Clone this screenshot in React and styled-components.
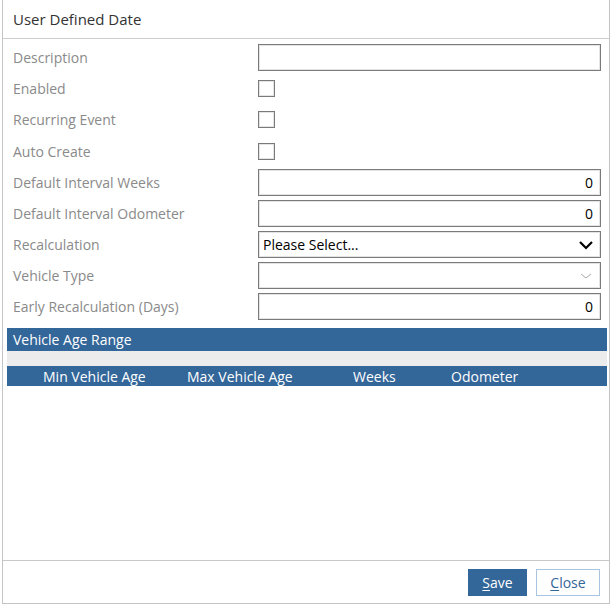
import React from 'react';
import styled, { createGlobalStyle } from 'styled-components';

const GlobalStyle = createGlobalStyle`
    body {
        margin: 0;
        background: #fff;
        font-family: "Open Sans", "Liberation Sans", sans-serif;
        font-size: 14px;
    }
`;

const Panel = styled.div`
    margin-left: 2px;
    width: 608px;
    height: 604px;
    box-sizing: border-box;
    border-left: 1px solid #c4c4c4;
    border-right: 1px solid #c4c4c4;
    border-bottom: 1px solid #c4c4c4;
    display: flex;
    flex-direction: column;
    background: #fff;
`;

const Header = styled.div`
    height: 38px;
    border-bottom: 1px solid #cccccc;
    display: flex;
    align-items: center;
    padding-left: 10px;
    font-size: 15px;
    color: #333;
`;

const Body = styled.div`
    flex: 1;
    display: flex;
    flex-direction: column;
`;

const Form = styled.div`
    display: grid;
    grid-template-columns: 245px 1fr;
    grid-template-rows: 27px 27px 27px 28px 27px 27px 27px 27px 27px;
    row-gap: 4px;
    padding: 5px 8px 0 10px;
`;

const Label = styled.div`
    color: #8a8a8a;
    display: flex;
    align-items: center;
`;

const Field = styled.div`
    display: flex;
    align-items: center;
`;

const TextBox = styled.div`
    width: 100%;
    height: 27px;
    box-sizing: border-box;
    border: 1px solid #7a7a7a;
    box-shadow: inset 0 0 0 1px #e4e4e4;
    display: flex;
    align-items: center;
    justify-content: ${p => (p.$right ? 'flex-end' : 'space-between')};
    padding: 0 7px 0 4px;
    color: #000;
`;

const Check = styled.div`
    width: 17px;
    height: 17px;
    box-sizing: border-box;
    border: 1px solid #7a7a7a;
    box-shadow: inset 0 0 0 1px #e4e4e4;
`;

const Section = styled.div`
    margin: 8px 2px 0 4px;
`;

const SectionTitle = styled.div`
    background: #336699;
    color: #fff;
    height: 23px;
    display: flex;
    align-items: center;
    padding-left: 6px;
`;

const Spacer = styled.div`
    background: #ececec;
    height: 15px;
`;

const ColumnBar = styled.div`
    background: #336699;
    color: #fff;
    height: 20px;
    display: grid;
    grid-template-columns: 144px 166px 98px 1fr;
    align-items: center;
    padding-left: 36px;
`;

const Footer = styled.div`
    height: 42px;
    border-top: 1px solid #c8c8c8;
    display: flex;
    justify-content: flex-end;
    align-items: center;
    gap: 9px;
    padding-right: 9px;
`;

const Button = styled.button`
    height: 27px;
    width: ${p => p.$w}px;
    box-sizing: border-box;
    font-family: inherit;
    font-size: 14px;
    border: 1px solid ${p => (p.$primary ? '#336699' : '#a9c4e0')};
    background: ${p => (p.$primary ? '#336699' : '#fff')};
    color: ${p => (p.$primary ? '#fff' : '#336699')};
    padding: 0;
    cursor: pointer;
    u { text-underline-offset: 2px; }
`;

const Chevron = ({ dim }) => (
    <svg width="14" height="10" viewBox="0 0 14 10">
        <polyline
            points={dim ? '2,3 7,7 12,3' : '1,2 7,8 13,2'}
            fill="none"
            stroke={dim ? '#a8a8a8' : '#000'}
            strokeWidth={dim ? 1 : 2.2}
        />
    </svg>
);

const App = () => (
    <>
        <GlobalStyle />
        <Panel>
            <Header>User Defined Date</Header>
            <Body>
                <Form>
                    <Label>Description</Label>
                    <Field><TextBox /></Field>
                    <Label>Enabled</Label>
                    <Field><Check /></Field>
                    <Label>Recurring Event</Label>
                    <Field><Check /></Field>
                    <Label>Auto Create</Label>
                    <Field><Check /></Field>
                    <Label>Default Interval Weeks</Label>
                    <Field><TextBox $right>0</TextBox></Field>
                    <Label>Default Interval Odometer</Label>
                    <Field><TextBox $right>0</TextBox></Field>
                    <Label>Recalculation</Label>
                    <Field><TextBox>Please Select...<Chevron /></TextBox></Field>
                    <Label>Vehicle Type</Label>
                    <Field><TextBox><span /><Chevron dim /></TextBox></Field>
                    <Label>Early Recalculation (Days)</Label>
                    <Field><TextBox $right>0</TextBox></Field>
                </Form>
                <Section>
                    <SectionTitle>Vehicle Age Range</SectionTitle>
                    <Spacer />
                    <ColumnBar>
                        <span>Min Vehicle Age</span>
                        <span>Max Vehicle Age</span>
                        <span>Weeks</span>
                        <span>Odometer</span>
                    </ColumnBar>
                </Section>
            </Body>
            <Footer>
                <Button $primary $w={59}><u>S</u>ave</Button>
                <Button $w={64}><u>C</u>lose</Button>
            </Footer>
        </Panel>
    </>
);

export default App;
